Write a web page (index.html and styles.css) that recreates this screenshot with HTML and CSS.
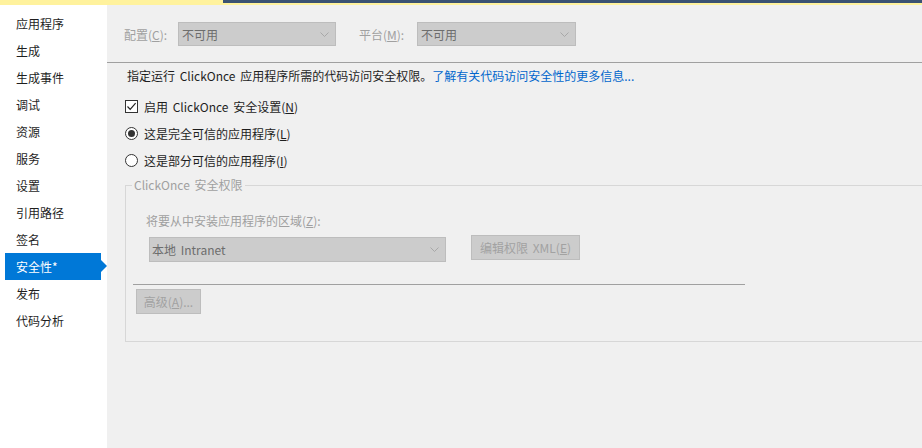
FILE: index.html
```html
<!DOCTYPE html>
<html lang="zh-CN">
<head>
<meta charset="utf-8">
<title>安全性</title>
<link rel="stylesheet" href="styles.css">
</head>
<body>
<div class="topbar">
  <div class="tb-left"></div>
  <div class="tb-right"></div>
</div>
<div class="main">
  <nav class="sidebar">
    <div class="nav-item">应用程序</div>
    <div class="nav-item">生成</div>
    <div class="nav-item">生成事件</div>
    <div class="nav-item">调试</div>
    <div class="nav-item">资源</div>
    <div class="nav-item">服务</div>
    <div class="nav-item">设置</div>
    <div class="nav-item">引用路径</div>
    <div class="nav-item">签名</div>
    <div class="nav-item active">安全性*</div>
    <div class="nav-item">发布</div>
    <div class="nav-item">代码分析</div>
  </nav>
  <section class="content">
    <div class="config-row">
      <span class="lbl lbl-config">配置(<u>C</u>):</span>
      <div class="combo combo-config"><span>不可用</span><svg class="chev" width="9" height="5" viewBox="0 0 9 5"><path d="M0.5 0.5 L4.5 4.5 L8.5 0.5" fill="none" stroke="#a8a8a8" stroke-width="1"/></svg></div>
      <span class="lbl lbl-platform">平台(<u>M</u>):</span>
      <div class="combo combo-platform"><span>不可用</span><svg class="chev" width="9" height="5" viewBox="0 0 9 5"><path d="M0.5 0.5 L4.5 4.5 L8.5 0.5" fill="none" stroke="#a8a8a8" stroke-width="1"/></svg></div>
    </div>
    <div class="sep"></div>
    <p class="desc">指定运行 ClickOnce 应用程序所需的代码访问安全权限。<a class="link" href="#">了解有关代码访问安全性的更多信息...</a></p>
    <div class="opt opt-first">
      <span class="checkbox"><svg width="11" height="11" viewBox="0 0 11 11"><path d="M1.5 5.5 L4.2 8.3 L9.6 2.2" fill="none" stroke="#222" stroke-width="1.2"/></svg></span>
      <span class="opt-label">启用 ClickOnce 安全设置(<u>N</u>)</span>
    </div>
    <div class="opt">
      <span class="radio checked"></span>
      <span class="opt-label">这是完全可信的应用程序(<u>L</u>)</span>
    </div>
    <div class="opt">
      <span class="radio"></span>
      <span class="opt-label">这是部分可信的应用程序(<u>I</u>)</span>
    </div>
    <fieldset class="group">
      <legend class="group-title">ClickOnce 安全权限</legend>
      <div class="zone-label">将要从中安装应用程序的区域(<u>Z</u>):</div>
      <div class="zone-row">
        <div class="combo combo-zone"><span>本地 Intranet</span><svg class="chev" width="9" height="5" viewBox="0 0 9 5"><path d="M0.5 0.5 L4.5 4.5 L8.5 0.5" fill="none" stroke="#a8a8a8" stroke-width="1"/></svg></div>
        <div class="btn btn-edit">编辑权限 XML(<u>E</u>)</div>
      </div>
      <div class="inner-sep"></div>
      <div class="btn btn-adv">高级(<u>A</u>)...</div>
    </fieldset>
  </section>
</div>
</body>
</html>
```

FILE: styles.css
```css
* { box-sizing: border-box; }
html, body {
  margin: 0;
  padding: 0;
}
body {
  width: 922px;
  height: 448px;
  overflow: hidden;
  background: #f0f0f0;
  font-family: "Noto Sans CJK SC", "Noto Sans", sans-serif;
  font-size: 12px;
  color: #1e1e1e;
  word-spacing: 2px;
}
.topbar {
  display: flex;
  height: 5px;
}
.tb-left {
  width: 223px;
  background: #fff29d;
}
.tb-right {
  flex: 1;
  background: #fff29d;
  border-top: 3px solid #3a5272;
}
.main {
  display: flex;
  height: 443px;
}
.sidebar {
  width: 107px;
  flex: none;
  background: #ffffff;
  padding-top: 5px;
}
.nav-item {
  position: relative;
  height: 27px;
  line-height: 27px;
  width: 96px;
  margin-left: 5px;
  padding-left: 11px;
  color: #1e1e1e;
  white-space: nowrap;
}
.nav-item.active {
  background: #0078d7;
  color: #ffffff;
}
.nav-item.active::after {
  content: "";
  position: absolute;
  left: 96px;
  top: 7px;
  border-left: 6px solid #0078d7;
  border-top: 6px solid transparent;
  border-bottom: 6px solid transparent;
}
.content {
  flex: 1;
  min-width: 0;
  overflow: hidden;
  padding-top: 17px;
}
.config-row {
  display: flex;
  align-items: center;
  height: 24px;
  padding-left: 17px;
}
.lbl {
  color: #a0a0a0;
  white-space: nowrap;
}
.lbl-config { width: 54px; }
.lbl-platform { width: 58px; margin-left: 23px; }
.combo {
  display: flex;
  align-items: center;
  justify-content: space-between;
  height: 24px;
  border: 1px solid #bdbdbd;
  background: #cccccc;
  color: #6d6d6d;
  padding-left: 3px;
  padding-right: 6px;
  white-space: nowrap;
}
.combo-config { width: 158px; }
.combo-platform { width: 159px; }
.chev { flex: none; }
.sep {
  margin-top: 16px;
  height: 1px;
  background: #a0a0a0;
}
.desc {
  margin: 5px 0 0 0;
  padding-left: 20px;
  line-height: 16px;
  white-space: nowrap;
}
.link {
  color: #0066cc;
  text-decoration: none;
}
.opt {
  display: flex;
  align-items: center;
  height: 27px;
  padding-left: 18px;
}
.opt-first { margin-top: 9px; }
.checkbox {
  width: 13px;
  height: 13px;
  border: 1px solid #333333;
  background: #ffffff;
  display: flex;
  align-items: center;
  justify-content: center;
  flex: none;
}
.radio {
  width: 13px;
  height: 13px;
  border: 1px solid #333333;
  border-radius: 50%;
  background: #ffffff;
  display: flex;
  align-items: center;
  justify-content: center;
  flex: none;
}
.radio.checked::before {
  content: "";
  width: 7px;
  height: 7px;
  border-radius: 50%;
  background: #333333;
}
.opt-label {
  margin-left: 6px;
  white-space: nowrap;
}
.group {
  margin: 3px 0 0 18px;
  padding: 0 0 27px 0;
  border: 1px solid #d7d7d7;
  border-right: none;
  min-width: 0;
}
.group-title {
  margin-left: 6px;
  padding: 0 2px;
  line-height: 16px;
  color: #a0a0a0;
}
.zone-label {
  margin-top: 20px;
  padding-left: 20px;
  line-height: 16px;
  color: #a0a0a0;
}
.zone-row {
  display: flex;
  align-items: flex-start;
  margin-top: 6px;
  margin-left: 23px;
}
.combo-zone {
  width: 297px;
  height: 25px;
  margin-top: 2px;
  padding-left: 2px;
}
.btn {
  display: flex;
  align-items: center;
  justify-content: center;
  height: 25px;
  border: 1px solid #bdbdbd;
  background: #cccccc;
  color: #a2a2a2;
  white-space: nowrap;
}
.btn-edit {
  width: 109px;
  margin-left: 25px;
}
.inner-sep {
  margin-top: 22px;
  margin-left: 7px;
  width: 612px;
  height: 1px;
  background: #a0a0a0;
}
.btn-adv {
  width: 65px;
  margin-top: 4px;
  margin-left: 10px;
}
```
